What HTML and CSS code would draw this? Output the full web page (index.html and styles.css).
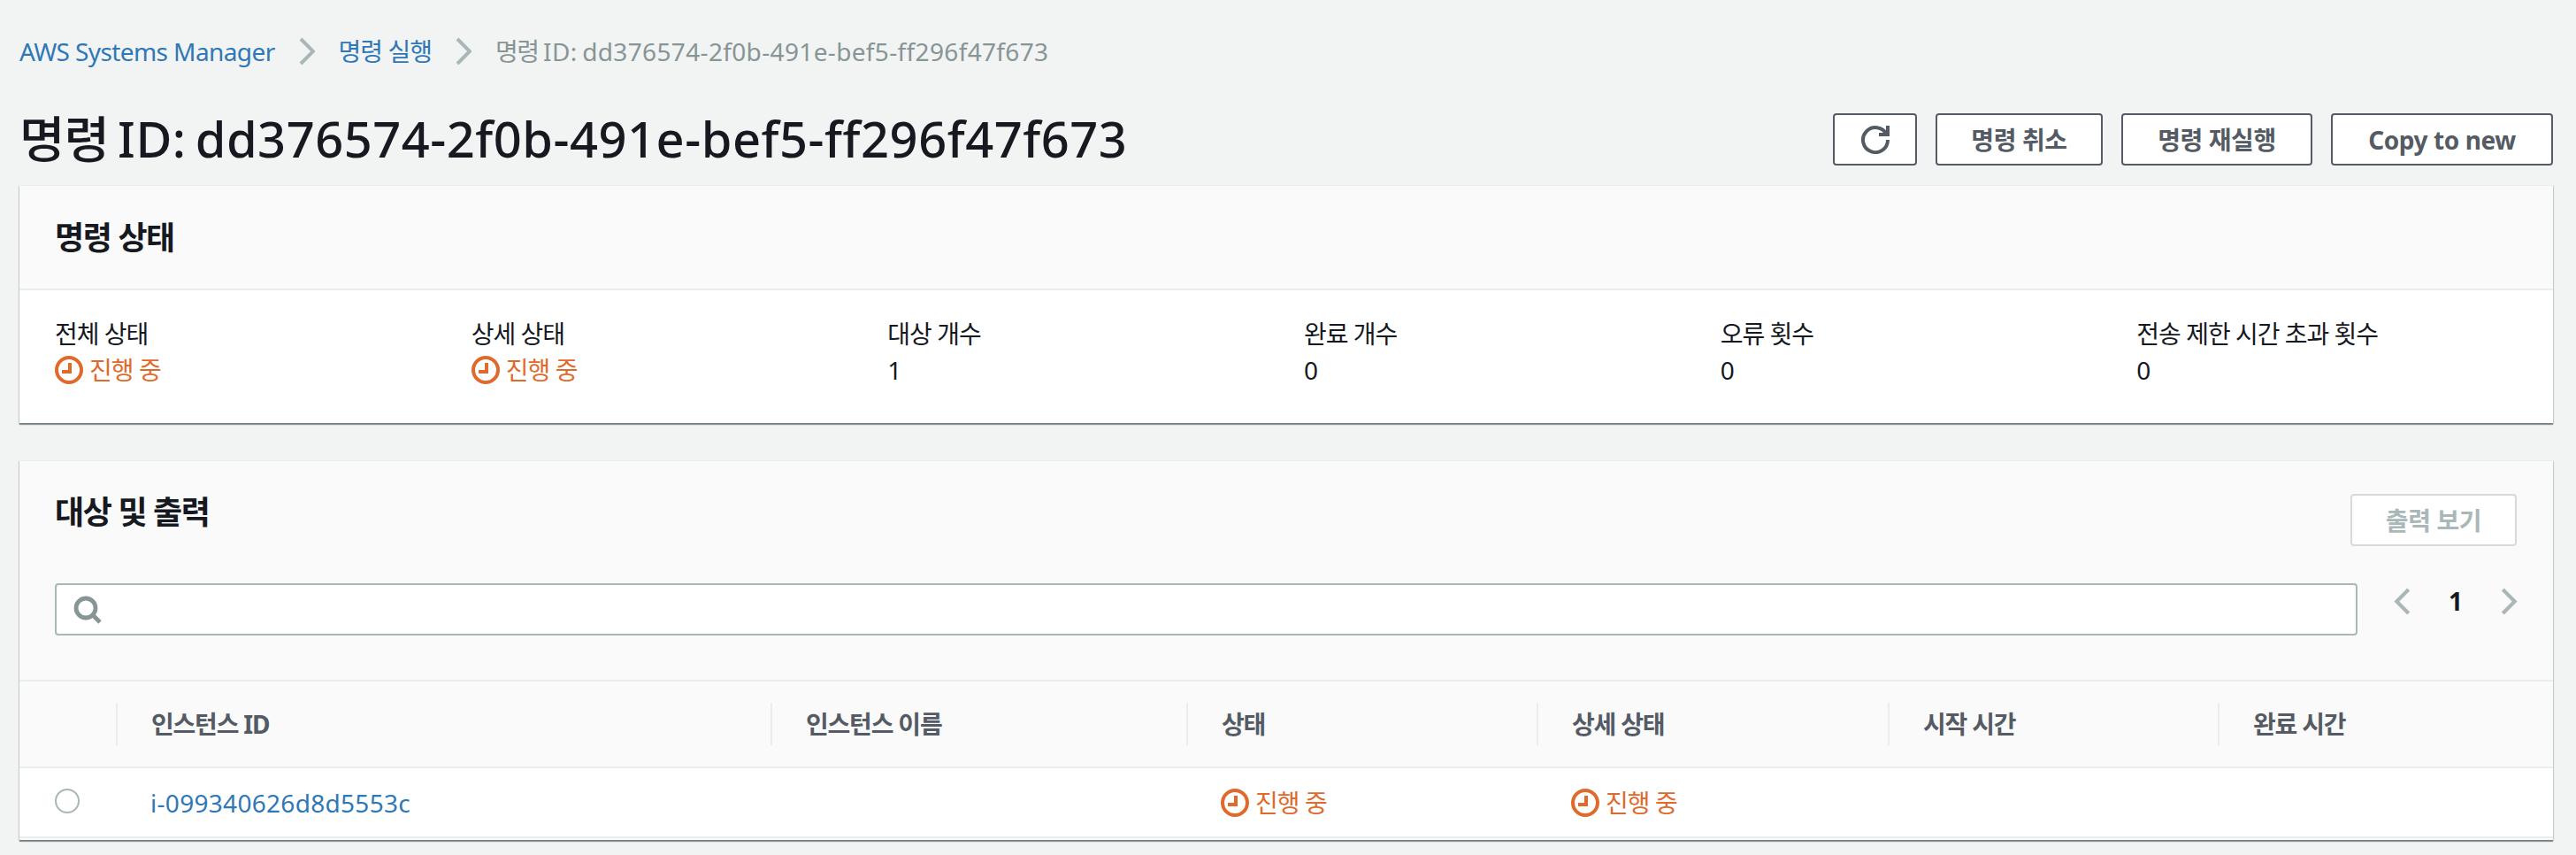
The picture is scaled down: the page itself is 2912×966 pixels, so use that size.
FILE: index.html
```html
<!DOCTYPE html>
<html lang="ko">
<head>
    <meta charset="UTF-8">
    <title>명령 ID: dd376574-2f0b-491e-bef5-ff296f47f673</title>
    <link rel="stylesheet" href="styles.css">
</head>
<body>
    <nav class="breadcrumbs">
        <a class="link crumb-root" href="#">AWS Systems Manager</a>
        <svg class="crumb-sep" viewBox="0 0 18 32"><path d="M2 2l14 14L2 30"/></svg>
        <a class="link crumb-ko" href="#">명령 실행</a>
        <svg class="crumb-sep" viewBox="0 0 18 32"><path d="M2 2l14 14L2 30"/></svg>
        <span class="crumb-current"><span class="ko">명령</span> ID: dd376574-2f0b-491e-bef5-ff296f47f673</span>
    </nav>

    <header class="page-head">
        <h1><span class="ko">명령</span> ID: dd376574-2f0b-491e-bef5-ff296f47f673</h1>
        <div class="actions">
            <button class="btn btn-icon">
                <svg viewBox="0 0 16 16"><path d="M10 5h5V0"/><path d="M15 8a7 7 0 1 1-.7-3"/></svg>
            </button>
            <button class="btn btn-cancel">명령 취소</button>
            <button class="btn btn-rerun">명령 재실행</button>
            <button class="btn btn-copy">Copy to new</button>
        </div>
    </header>

    <!-- 명령 상태 -->
    <section class="card status-card">
        <h2 class="card-title">명령 상태</h2>
        <div class="stats">
            <div class="stat">
                <div>전체 상태</div>
                <div class="progress">
                    <svg class="clock" viewBox="0 0 16 16"><circle cx="8" cy="8" r="7"/><path d="M8.5 4v5H4"/></svg>진행 중
                </div>
            </div>
            <div class="stat">
                <div>상세 상태</div>
                <div class="progress">
                    <svg class="clock" viewBox="0 0 16 16"><circle cx="8" cy="8" r="7"/><path d="M8.5 4v5H4"/></svg>진행 중
                </div>
            </div>
            <div class="stat"><div>대상 개수</div><div class="value">1</div></div>
            <div class="stat"><div>완료 개수</div><div class="value">0</div></div>
            <div class="stat"><div>오류 횟수</div><div class="value">0</div></div>
            <div class="stat"><div>전송 제한 시간 초과 횟수</div><div class="value">0</div></div>
        </div>
    </section>

    <!-- 대상 및 출력 -->
    <section class="card targets-card">
        <div class="targets-head">
            <h2 class="card-title">대상 및 출력</h2>
            <button class="btn btn-disabled">출력 보기</button>
        </div>
        <div class="filter-row">
            <div class="search">
                <svg viewBox="0 0 16 16"><circle cx="7" cy="7" r="5.5"/><path d="M11 11l4 4"/></svg>
            </div>
            <div class="pager">
                <svg viewBox="0 0 18 30"><path d="M16 2L3 15l13 13"/></svg>
                <span>1</span>
                <svg viewBox="0 0 18 30"><path d="M2 2l13 13L2 28"/></svg>
            </div>
        </div>
        <div class="table-row table-head">
            <div class="cell"></div>
            <div class="cell">인스턴스 ID</div>
            <div class="cell">인스턴스 이름</div>
            <div class="cell">상태</div>
            <div class="cell">상세 상태</div>
            <div class="cell">시작 시간</div>
            <div class="cell">완료 시간</div>
        </div>
        <div class="table-row table-body">
            <div class="cell"><span class="radio"></span></div>
            <div class="cell"><a class="link instance-id" href="#">i-099340626d8d5553c</a></div>
            <div class="cell"></div>
            <div class="cell progress">
                <svg class="clock" viewBox="0 0 16 16"><circle cx="8" cy="8" r="7"/><path d="M8.5 4v5H4"/></svg>진행 중
            </div>
            <div class="cell progress">
                <svg class="clock" viewBox="0 0 16 16"><circle cx="8" cy="8" r="7"/><path d="M8.5 4v5H4"/></svg>진행 중
            </div>
            <div class="cell"></div>
            <div class="cell"></div>
        </div>
    </section>
</body>
</html>
```

FILE: styles.css
```css
/* 기본 */
body {
    margin: 0;
    height: 966px;
    overflow: hidden;
    box-sizing: border-box;
    padding: 0 26px 0 22px;
    background-color: #f2f3f3;
    color: #16191f;
    font-family: "Noto Sans", "Noto Sans CJK KR", sans-serif;
    font-size: 28px;
    line-height: 40px;
}

.link {
    color: #2f78b7;
    text-decoration: none;
}

/* 상단 경로 */
.breadcrumbs {
    display: flex;
    align-items: center;
    height: 116px;
}
.crumb-root {
    letter-spacing: -0.6px;
}
.crumb-ko {
    letter-spacing: -1px;
}
.crumb-sep {
    width: 18px;
    height: 32px;
    margin: 0 27px;
    fill: none;
    stroke: #aab7b8;
    stroke-width: 4;
}
.crumb-current {
    color: #879596;
    letter-spacing: 0.35px;
    word-spacing: -2px;
}
.crumb-current .ko {
    letter-spacing: -1.5px;
}

/* 제목 + 버튼 */
.page-head {
    display: flex;
    justify-content: space-between;
    align-items: center;
    box-sizing: border-box;
    height: 93px;
    padding-bottom: 10px;
}
h1 {
    margin: -2px 0 2px;
    font-size: 56px;
    font-weight: 500;
    line-height: 70px;
    letter-spacing: 0.5px;
    word-spacing: -5px;
}
h1 .ko {
    letter-spacing: -1px;
}
.actions {
    display: flex;
    gap: 21px;
}
.btn {
    box-sizing: border-box;
    height: 59px;
    padding: 0;
    background-color: #fff;
    border: 2px solid #545b64;
    border-radius: 4px;
    color: #545b64;
    font-family: inherit;
    font-size: 28px;
    font-weight: 700;
    line-height: 40px;
    letter-spacing: -0.4px;
}
.btn-icon {
    width: 95px;
    display: flex;
    align-items: center;
    justify-content: center;
}
.btn-icon svg {
    width: 32px;
    height: 32px;
    fill: none;
    stroke: #545b64;
    stroke-width: 2;
}
.btn-cancel { width: 189px; }
.btn-rerun { width: 216px; }
.btn-copy { width: 251px; }
.btn-disabled {
    width: 188px;
    border-color: #d5dbdb;
    color: #aab7b8;
}

/* 카드 */
.card {
    background-color: #fafafa;
    border-top: 1px solid #eaeded;
    box-shadow: 0 2px 1px 0 rgba(0, 28, 36, 0.4), 1px 1px 1px 0 rgba(0, 28, 36, 0.12), -1px 1px 1px 0 rgba(0, 28, 36, 0.12);
}
.card-title {
    margin: 0;
    font-size: 36px;
    font-weight: 700;
    line-height: 48px;
    letter-spacing: -1.4px;
}

.status-card {
    height: 268px;
    margin-bottom: 42px;
}
.status-card .card-title {
    box-sizing: border-box;
    height: 118px;
    padding: 35px 40px;
    border-bottom: 2px solid #eaeded;
}
.stats {
    display: grid;
    grid-template-columns: repeat(6, 1fr);
    height: 150px;
    box-sizing: border-box;
    padding: 29px 0 0 40px;
    background-color: #fff;
    letter-spacing: -1px;
}
.value {
    margin-top: 1px;
}
.progress {
    display: flex;
    align-items: center;
    gap: 7px;
    color: #df6a2b;
    letter-spacing: -0.9px;
}
.stat .progress {
    margin-top: 1px;
}
.clock {
    width: 32px;
    height: 32px;
    fill: none;
    stroke: #df6a2b;
    stroke-width: 2;
}

.targets-card {
    height: 428px;
}
.targets-head {
    display: flex;
    justify-content: space-between;
    align-items: flex-start;
    padding: 37px 41px 0 40px;
}
.targets-head .card-title {
    margin-top: -3px;
}
.filter-row {
    display: flex;
    align-items: center;
    margin: 42px 0 0 40px;
}
.search {
    box-sizing: border-box;
    display: flex;
    align-items: center;
    width: 2603px;
    height: 59px;
    padding-left: 19px;
    background-color: #fff;
    border: 2px solid #aab7b8;
    border-radius: 4px;
}
.search svg {
    width: 32px;
    height: 32px;
    fill: none;
    stroke: #879596;
    stroke-width: 2.4;
}
.pager {
    display: flex;
    align-items: center;
    margin: 0 0 19px 41px;
    font-weight: 700;
}
.pager svg {
    width: 19px;
    height: 31px;
    fill: none;
    stroke: #aab7b8;
    stroke-width: 4;
}
.pager span {
    width: 102px;
    text-align: center;
}

/* 표 */
.table-row {
    display: grid;
    grid-template-columns: 109px 740px 470px 396px 397px 373px 1fr;
    box-sizing: border-box;
}
.table-head {
    height: 100px;
    margin-top: 50px;
    align-items: center;
    border-top: 2px solid #eaeded;
    border-bottom: 2px solid #eaeded;
    color: #545b64;
    font-weight: 700;
    letter-spacing: -1.2px;
}
.table-head .cell {
    box-sizing: border-box;
    height: 48px;
    padding-left: 38px;
    line-height: 48px;
    border-left: 2px solid #eaeded;
}
.table-head .cell:first-child {
    border-left: 0;
}
.table-body {
    height: 79px;
    align-items: center;
    background-color: #fff;
    border-bottom: 2px solid #eaeded;
}
.table-body .cell {
    padding-left: 39px;
}
.table-body .cell:first-child {
    padding-left: 40px;
}
.instance-id {
    letter-spacing: 0.3px;
}
.radio {
    display: block;
    box-sizing: border-box;
    width: 28px;
    height: 28px;
    margin-bottom: 4px;
    border: 2px solid #aab7b8;
    border-radius: 50%;
}
```
